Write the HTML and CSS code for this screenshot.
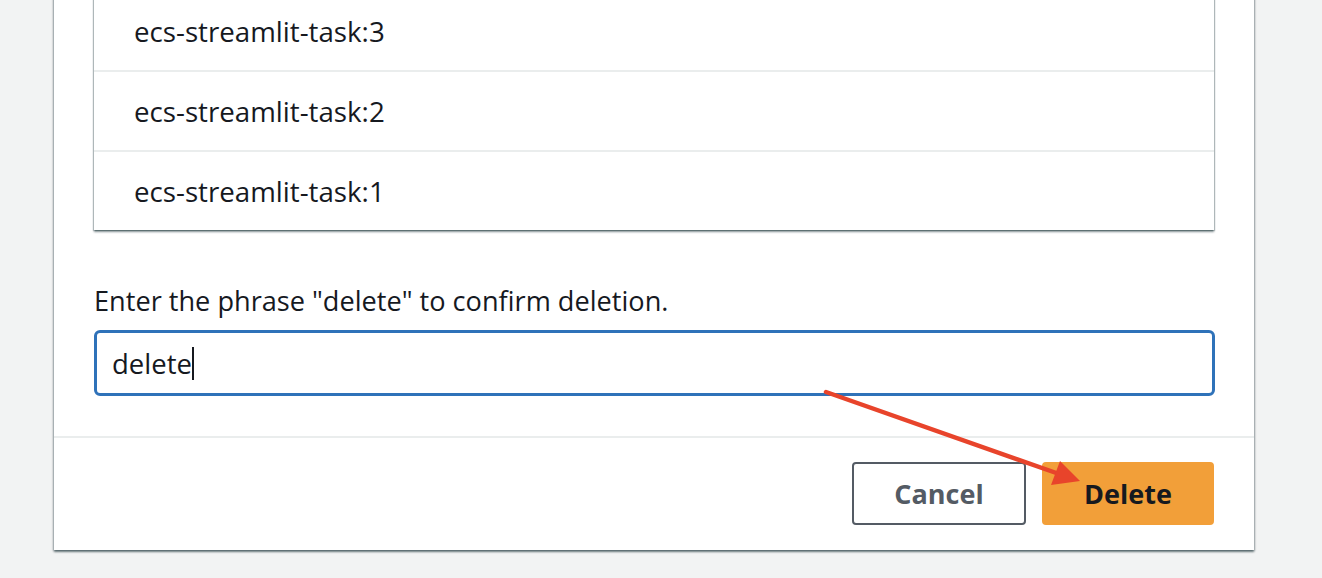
FILE: index.html
```html
<!DOCTYPE html>
<html lang="en">
<head>
<meta charset="utf-8">
<title>Delete task definition</title>
<link rel="stylesheet" href="styles.css">
</head>
<body>
<div class="modal">
  <div class="modal-body">
    <ul class="rev-list">
      <li class="rev-row">ecs-streamlit-task:3</li>
      <li class="rev-row">ecs-streamlit-task:2</li>
      <li class="rev-row">ecs-streamlit-task:1</li>
    </ul>
    <label class="confirm-label">Enter the phrase "delete" to confirm deletion.</label>
    <div class="text-input"><span class="input-value">delete</span><span class="caret"></span></div>
  </div>
  <div class="modal-footer">
    <button class="btn btn-normal">Cancel</button>
    <button class="btn btn-primary">Delete</button>
  </div>
</div>
<svg class="annotation" width="1322" height="578" viewBox="0 0 1322 578">
  <line x1="826" y1="392" x2="1062" y2="475" stroke="#e8442b" stroke-width="4.5" stroke-linecap="round"/>
  <polygon points="1060,461 1051,485 1080,481" fill="#e8442b"/>
</svg>
</body>
</html>
```
FILE: styles.css
```css
html, body {
  margin: 0;
  padding: 0;
}
body {
  background: #f2f3f3;
  width: 1322px;
  height: 578px;
  overflow: hidden;
  position: relative;
  font-family: "Open Sans", "Noto Sans", sans-serif;
  color: #16191f;
}
.modal {
  margin: -8px 0 0 54px;
  width: 1200px;
  background: #fff;
  box-shadow: 0 2px 2px rgba(0, 28, 36, 0.45), 1px 1px 2px rgba(0, 28, 36, 0.25), -1px 1px 2px rgba(0, 28, 36, 0.25);
}
.modal-body {
  padding: 0 40px 40px 40px;
}
.rev-list {
  list-style: none;
  margin: 0;
  padding: 0;
  background: #fff;
  box-shadow: 0 2px 2px rgba(0, 28, 36, 0.45), 1px 1px 1px rgba(0, 28, 36, 0.2), -1px 1px 1px rgba(0, 28, 36, 0.2);
}
.rev-row {
  height: 78px;
  display: flex;
  align-items: center;
  padding-left: 40px;
  font-size: 27.7px;
}
.rev-row + .rev-row {
  border-top: 2px solid #eaeded;
}
.confirm-label {
  display: block;
  margin-top: 51px;
  font-size: 27.15px;
  line-height: 40px;
}
.text-input {
  margin: 9px -1px 0 0;
  height: 60px;
  border: 3px solid #2f72b9;
  border-radius: 6px;
  display: flex;
  align-items: center;
  padding-left: 15px;
  font-size: 27.5px;
}
.caret {
  display: inline-block;
  width: 2px;
  height: 33px;
  background: #16191f;
}
.modal-footer {
  border-top: 2px solid #eaeded;
  padding: 24px 40px 25px 0;
  display: flex;
  justify-content: flex-end;
  gap: 16px;
}
.btn {
  height: 63px;
  font-family: "Open Sans", "Noto Sans", sans-serif;
  font-weight: 700;
  font-size: 27px;
  border-radius: 4px;
  padding: 0;
}
.btn-normal {
  width: 174px;
  background: #fff;
  border: 2px solid #545b64;
  color: #545b64;
}
.btn-primary {
  width: 172px;
  background: #f29f39;
  border: 2px solid #f29f39;
  color: #16191f;
}
.annotation {
  position: absolute;
  top: 0;
  left: 0;
  pointer-events: none;
}
```
